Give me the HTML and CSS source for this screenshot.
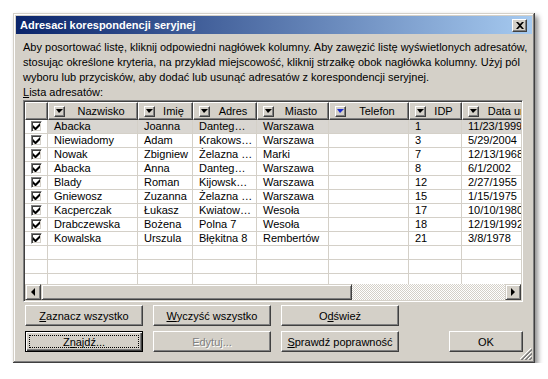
FILE: index.html
```html
<!DOCTYPE html>
<html lang="pl">
<head>
    <meta charset="UTF-8">
    <title>Adresaci korespondencji seryjnej</title>
    <link rel="stylesheet" href="styles.css">
</head>
<body>
    <div class="dialog">
        <div class="titlebar">
            <span class="title">Adresaci korespondencji seryjnej</span>
            <button class="close-btn" aria-label="Zamknij">
                <svg width="8" height="7" viewBox="0 0 8 7"><path d="M0 0h2l2 2 2-2h2L5 3.5 8 7H6L4 5 2 7H0l3-3.5z" fill="#000"/></svg>
            </button>
        </div>
        <div class="content">
            <p class="intro">Aby posortować listę, kliknij odpowiedni nagłówek kolumny. Aby zawęzić listę wyświetlonych adresatów,<br>stosując określone kryteria, na przykład miejscowość, kliknij strzałkę obok nagłówka kolumny. Użyj pól<br>wyboru lub przycisków, aby dodać lub usunąć adresatów z korespondencji seryjnej.</p>
            <div class="label"><u>L</u>ista adresatów:</div>

            <div class="listbox">
                <div class="grid">
                    <div class="row head">
                        <div class="hcell c-check"></div>
                        <div class="hcell c-name"><span class="drop"></span><span class="hlabel">Nazwisko</span></div>
                        <div class="hcell c-first"><span class="drop"></span><span class="hlabel">Imię</span></div>
                        <div class="hcell c-addr"><span class="drop"></span><span class="hlabel">Adres</span></div>
                        <div class="hcell c-city"><span class="drop"></span><span class="hlabel">Miasto</span></div>
                        <div class="hcell c-phone"><span class="drop blue"></span><span class="hlabel">Telefon</span></div>
                        <div class="hcell c-id"><span class="drop"></span><span class="hlabel">IDP</span></div>
                        <div class="hcell c-date"><span class="drop"></span><span class="hlabel">Data urodzenia</span></div>
                    </div>

                    <div class="row selected">
                        <div class="cell c-check"><span class="checkbox"><svg width="7" height="7" viewBox="0 0 7 7"><path d="M0 2l2.5 2.5L7 0v3L2.5 7.5 0 5z"/></svg></span></div>
                        <div class="cell c-name">Abacka</div>
                        <div class="cell c-first">Joanna</div>
                        <div class="cell c-addr">Danteg…</div>
                        <div class="cell c-city">Warszawa</div>
                        <div class="cell c-phone"></div>
                        <div class="cell c-id">1</div>
                        <div class="cell c-date">11/23/1999</div>
                    </div>
                    <div class="row">
                        <div class="cell c-check"><span class="checkbox"><svg width="7" height="7" viewBox="0 0 7 7"><path d="M0 2l2.5 2.5L7 0v3L2.5 7.5 0 5z"/></svg></span></div>
                        <div class="cell c-name">Niewiadomy</div>
                        <div class="cell c-first">Adam</div>
                        <div class="cell c-addr">Krakows…</div>
                        <div class="cell c-city">Warszawa</div>
                        <div class="cell c-phone"></div>
                        <div class="cell c-id">3</div>
                        <div class="cell c-date">5/29/2004</div>
                    </div>
                    <div class="row">
                        <div class="cell c-check"><span class="checkbox"><svg width="7" height="7" viewBox="0 0 7 7"><path d="M0 2l2.5 2.5L7 0v3L2.5 7.5 0 5z"/></svg></span></div>
                        <div class="cell c-name">Nowak</div>
                        <div class="cell c-first">Zbigniew</div>
                        <div class="cell c-addr">Żelazna …</div>
                        <div class="cell c-city">Marki</div>
                        <div class="cell c-phone"></div>
                        <div class="cell c-id">7</div>
                        <div class="cell c-date">12/13/1968</div>
                    </div>
                    <div class="row">
                        <div class="cell c-check"><span class="checkbox"><svg width="7" height="7" viewBox="0 0 7 7"><path d="M0 2l2.5 2.5L7 0v3L2.5 7.5 0 5z"/></svg></span></div>
                        <div class="cell c-name">Abacka</div>
                        <div class="cell c-first">Anna</div>
                        <div class="cell c-addr">Danteg…</div>
                        <div class="cell c-city">Warszawa</div>
                        <div class="cell c-phone"></div>
                        <div class="cell c-id">8</div>
                        <div class="cell c-date">6/1/2002</div>
                    </div>
                    <div class="row">
                        <div class="cell c-check"><span class="checkbox"><svg width="7" height="7" viewBox="0 0 7 7"><path d="M0 2l2.5 2.5L7 0v3L2.5 7.5 0 5z"/></svg></span></div>
                        <div class="cell c-name">Blady</div>
                        <div class="cell c-first">Roman</div>
                        <div class="cell c-addr">Kijowsk…</div>
                        <div class="cell c-city">Warszawa</div>
                        <div class="cell c-phone"></div>
                        <div class="cell c-id">12</div>
                        <div class="cell c-date">2/27/1955</div>
                    </div>
                    <div class="row">
                        <div class="cell c-check"><span class="checkbox"><svg width="7" height="7" viewBox="0 0 7 7"><path d="M0 2l2.5 2.5L7 0v3L2.5 7.5 0 5z"/></svg></span></div>
                        <div class="cell c-name">Gniewosz</div>
                        <div class="cell c-first">Zuzanna</div>
                        <div class="cell c-addr">Żelazna …</div>
                        <div class="cell c-city">Warszawa</div>
                        <div class="cell c-phone"></div>
                        <div class="cell c-id">15</div>
                        <div class="cell c-date">1/15/1975</div>
                    </div>
                    <div class="row">
                        <div class="cell c-check"><span class="checkbox"><svg width="7" height="7" viewBox="0 0 7 7"><path d="M0 2l2.5 2.5L7 0v3L2.5 7.5 0 5z"/></svg></span></div>
                        <div class="cell c-name">Kacperczak</div>
                        <div class="cell c-first">Łukasz</div>
                        <div class="cell c-addr">Kwiatow…</div>
                        <div class="cell c-city">Wesoła</div>
                        <div class="cell c-phone"></div>
                        <div class="cell c-id">17</div>
                        <div class="cell c-date">10/10/1980</div>
                    </div>
                    <div class="row">
                        <div class="cell c-check"><span class="checkbox"><svg width="7" height="7" viewBox="0 0 7 7"><path d="M0 2l2.5 2.5L7 0v3L2.5 7.5 0 5z"/></svg></span></div>
                        <div class="cell c-name">Drabczewska</div>
                        <div class="cell c-first">Bożena</div>
                        <div class="cell c-addr">Polna 7</div>
                        <div class="cell c-city">Wesoła</div>
                        <div class="cell c-phone"></div>
                        <div class="cell c-id">18</div>
                        <div class="cell c-date">12/19/1992</div>
                    </div>
                    <div class="row">
                        <div class="cell c-check"><span class="checkbox"><svg width="7" height="7" viewBox="0 0 7 7"><path d="M0 2l2.5 2.5L7 0v3L2.5 7.5 0 5z"/></svg></span></div>
                        <div class="cell c-name">Kowalska</div>
                        <div class="cell c-first">Urszula</div>
                        <div class="cell c-addr">Błękitna 8</div>
                        <div class="cell c-city">Rembertów</div>
                        <div class="cell c-phone"></div>
                        <div class="cell c-id">21</div>
                        <div class="cell c-date">3/8/1978</div>
                    </div>
                    <div class="row">
                        <div class="cell c-check"></div><div class="cell c-name"></div><div class="cell c-first"></div><div class="cell c-addr"></div>
                        <div class="cell c-city"></div><div class="cell c-phone"></div><div class="cell c-id"></div><div class="cell c-date"></div>
                    </div>
                    <div class="row">
                        <div class="cell c-check"></div><div class="cell c-name"></div><div class="cell c-first"></div><div class="cell c-addr"></div>
                        <div class="cell c-city"></div><div class="cell c-phone"></div><div class="cell c-id"></div><div class="cell c-date"></div>
                    </div>
                    <div class="row">
                        <div class="cell c-check"></div><div class="cell c-name"></div><div class="cell c-first"></div><div class="cell c-addr"></div>
                        <div class="cell c-city"></div><div class="cell c-phone"></div><div class="cell c-id"></div><div class="cell c-date"></div>
                    </div>
                </div>
                <div class="hscroll">
                    <span class="sb-btn"><span class="arrow-left"></span></span>
                    <span class="sb-thumb"></span>
                    <span class="sb-track"></span>
                    <span class="sb-btn"><span class="arrow-right"></span></span>
                </div>
            </div>

            <div class="buttons">
                <button class="btn"><u>Z</u>aznacz wszystko</button>
                <button class="btn"><u>W</u>yczyść wszystko</button>
                <button class="btn">O<u>d</u>śwież</button>
                <span></span>
                <span></span>
                <button class="btn default">Z<u>n</u>ajdź...</button>
                <button class="btn" disabled>Edytuj...</button>
                <button class="btn"><u>S</u>prawdź poprawność</button>
                <span></span>
                <button class="btn">OK</button>
            </div>
        </div>
        <svg class="grip" width="12" height="12" viewBox="0 0 12 12">
            <path d="M11 0L0 11M11 4L4 11M11 8L8 11" stroke="#fff" stroke-width="1"/>
            <path d="M12 1L1 12M12 2L2 12M12 5L5 12M12 6L6 12M12 9L9 12M12 10L10 12" stroke="#808080" stroke-width="1"/>
        </svg>
    </div>
</body>
</html>
```

FILE: styles.css
```css
* {
    box-sizing: border-box;
}

body {
    margin: 0;
    background: #fff;
    font-family: "Liberation Sans", Arial, sans-serif;
    font-size: 11px;
    color: #000;
}

.dialog {
    position: relative;
    width: 522px;
    height: 350px;
    margin: 13px 0 0 13px;
    padding: 3px;
    background: #d4d0c8;
    box-shadow: inset -1px -1px #404040, inset 1px 1px #d4d0c8,
                inset -2px -2px #808080, inset 2px 2px #fff,
                3px 3px 5px rgba(0, 0, 0, 0.45);
}

/* pasek tytułu */
.titlebar {
    display: flex;
    align-items: center;
    justify-content: space-between;
    height: 18px;
    padding: 0 5px 0 4px;
    background: linear-gradient(to right, #0a246a, #a6caf0);
}

.title {
    color: #fff;
    font-weight: bold;
}

.close-btn {
    display: flex;
    align-items: center;
    justify-content: center;
    width: 15px;
    height: 13px;
    padding: 0;
    background: #d4d0c8;
    border: 1px solid;
    border-color: #fff #404040 #404040 #fff;
    box-shadow: inset -1px -1px #808080;
}

.content {
    padding: 6px 9px 0 7px;
}

.intro {
    margin: 0;
    line-height: 15px;
    white-space: nowrap;
}

.label {
    line-height: 15px;
}

/* lista adresatów */
.listbox {
    display: flex;
    flex-direction: column;
    height: 202px;
    border: 1px solid;
    border-color: #808080 #fff #fff #808080;
    box-shadow: inset 1px 1px #404040, inset -1px -1px #d4d0c8;
    padding: 1px;
    background: #fff;
}

.grid {
    flex: 1;
    overflow: hidden;
}

.row {
    display: flex;
    width: max-content;
}

.hcell {
    flex: none;
    display: flex;
    align-items: center;
    height: 18px;
    padding-left: 5px;
    background: #d4d0c8;
    border: 1px solid;
    border-color: #fff #404040 #404040 #fff;
    box-shadow: inset -1px -1px #808080;
}

.drop {
    flex: none;
    display: flex;
    align-items: center;
    justify-content: center;
    width: 11px;
    height: 11px;
    border: 1px solid;
    border-color: #fff #404040 #404040 #fff;
    box-shadow: inset -1px -1px #808080;
}

.drop::after {
    content: '';
    border-left: 3px solid transparent;
    border-right: 4px solid transparent;
    border-top: 4px solid #000;
}

.drop.blue::after {
    border-top-color: #1c2ccf;
}

.hlabel {
    flex: 1;
    text-align: center;
    white-space: nowrap;
}

.cell {
    flex: none;
    height: 14px;
    line-height: 13px;
    padding-left: 6px;
    border-right: 1px solid #d4d0c8;
    border-bottom: 1px solid #d4d0c8;
    white-space: nowrap;
    overflow: hidden;
}

.row.selected .cell:not(.c-check) {
    background: #d9d6d1;
}

.cell.c-check {
    padding-left: 0;
    display: flex;
    align-items: center;
    justify-content: center;
}

.checkbox {
    display: flex;
    align-items: center;
    justify-content: center;
    width: 11px;
    height: 11px;
    background: #fff;
    border: 1px solid;
    border-color: #808080 #fff #fff #808080;
    box-shadow: inset 1px 1px #404040, inset -1px -1px #d4d0c8;
}

.c-check { width: 23px; }
.c-name { width: 90px; }
.c-first { width: 55px; }
.c-addr { width: 64px; }
.c-city { width: 72px; }
.c-phone { width: 80px; }
.c-id { width: 53px; }
.c-date { width: 110px; }

/* pasek przewijania */
.hscroll {
    display: flex;
    height: 16px;
    flex: none;
}

.sb-btn,
.sb-thumb {
    display: flex;
    align-items: center;
    justify-content: center;
    background: #d4d0c8;
    border: 1px solid;
    border-color: #d4d0c8 #404040 #404040 #d4d0c8;
    box-shadow: inset 1px 1px #fff, inset -1px -1px #808080;
}

.sb-btn {
    width: 16px;
}

.sb-thumb {
    width: 311px;
}

.sb-track {
    flex: 1;
    background: repeating-conic-gradient(#fff 0 25%, #d4d0c8 0 50%) 0 0 / 2px 2px;
}

.arrow-left {
    border-right: 4px solid #000;
    border-top: 4px solid transparent;
    border-bottom: 4px solid transparent;
}

.arrow-right {
    border-left: 4px solid #000;
    border-top: 4px solid transparent;
    border-bottom: 4px solid transparent;
}

/* przyciski */
.buttons {
    display: grid;
    grid-template-columns: 118px 118px 118px 1fr 74px;
    grid-auto-rows: 21px;
    column-gap: 10px;
    row-gap: 5px;
    margin-top: 3px;
    padding-left: 2px;
}

.btn {
    position: relative;
    padding: 0;
    font: inherit;
    color: #000;
    background: #d4d0c8;
    border: 1px solid;
    border-color: #fff #404040 #404040 #fff;
    box-shadow: inset -1px -1px #808080;
}

.btn.default {
    border-color: #000;
    box-shadow: inset 1px 1px #fff, inset -1px -1px #404040, inset -2px -2px #808080;
}

.btn.default::after {
    content: '';
    position: absolute;
    top: 3px;
    left: 3px;
    right: 3px;
    bottom: 3px;
    border: 1px dotted #000;
}

.btn:disabled {
    color: #808080;
    text-shadow: 1px 1px #fff;
}

.grip {
    position: absolute;
    right: 3px;
    bottom: 3px;
}
```
